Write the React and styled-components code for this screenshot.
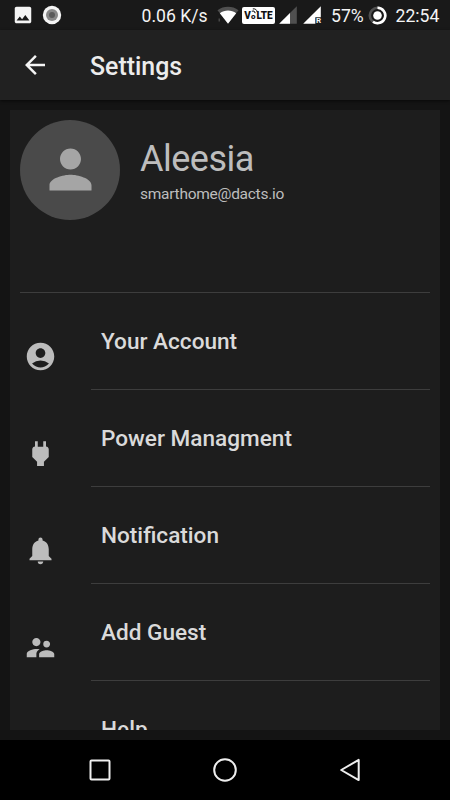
import React from 'react'
import styled, { createGlobalStyle } from 'styled-components'
import {
    MdAccountCircle,
    MdArrowBack,
    MdImage,
    MdNotifications,
    MdPerson,
    MdPower,
    MdSupervisorAccount
} from 'react-icons/md'

const MENU_ITEMS = [
    { label: 'Your Account', icon: MdAccountCircle },
    { label: 'Power Managment', icon: MdPower },
    { label: 'Notification', icon: MdNotifications },
    { label: 'Add Guest', icon: MdSupervisorAccount },
    { label: 'Help', icon: null },
]

const RecordIcon = () => (
    <svg width="20" height="20" viewBox="0 0 20 20">
        <circle cx="10" cy="10" r="9.2" fill="#f4f4f4" />
        <circle cx="10" cy="10" r="6" fill="#888" />
        <circle cx="10" cy="10" r="3" fill="#5a5a5a" />
    </svg>
)

const WifiIcon = () => (
    <svg width="22" height="18" viewBox="0 0 22 18">
        <path d="M0.5 4.200C6.500-.4 15.500-.4 21.500 4.200L11 17.500Z" fill="#505050" />
        <path d="M2.800 7.200C7.500 3.700 14.500 3.700 19.200 7.200L11 17.800Z" fill="#fff" />
        <path d="M1.500 12.500h1.500v3h-1.500z" fill="#484848" />
    </svg>
)

const SignalIcon = ({ roaming }) => (
    <svg width="18" height="18" viewBox="0 0 18 18">
        {roaming
            ? <path d="M17.800.2V11.200H12.300V17.800H.2Z" fill="#fff" />
            : <>
                <path d="M17.800.2V17.800H.2Z" fill="#505050" />
                <path d="M11 7V17.800H.2Z" fill="#fff" />
            </>}
    </svg>
)

const BatteryIcon = () => (
    <svg width="19" height="19" viewBox="0 0 19 19" fill="none">
        <circle cx="9.5" cy="9.5" r="7.700" stroke="#505050" strokeWidth="2.600" />
        <path d="M9.500 1.800a7.700 7.700 0 1 1-4.500 13.900" stroke="#fff" strokeWidth="2.600" />
        <circle cx="9.5" cy="9.5" r="4.300" fill="#fff" />
    </svg>
)

// two small waves rising from the "o" of the VoLTE badge
const VolteWaves = () => (
    <svg width="7" height="6" viewBox="0 0 7 6" fill="none" stroke="#111" strokeWidth="1">
        <path d="M.8 3.200Q3.500 1.800 4.200 5.200" />
        <path d="M1.800.9Q5.500.4 6.200 4" />
    </svg>
)

const StatusBar = () => (
    <Status>
        <StatusItem $left={11.5}><MdImage size={22} /></StatusItem>
        <StatusItem $left={8.5}><RecordIcon /></StatusItem>
        <StatusText $left={79.5} $width={66}>0.06 K/s</StatusText>
        <StatusItem $left={9.5}><WifiIcon /></StatusItem>
        <Volte>
            <span>V</span>
            <VolteO>o<VolteWaves /></VolteO>
            <span>LTE</span>
        </Volte>
        <StatusItem $left={4}><SignalIcon /></StatusItem>
        <StatusItem $left={6}>
            <SignalIcon roaming />
            <Roaming>R</Roaming>
        </StatusItem>
        <StatusText $left={10} $width={32}>57%</StatusText>
        <StatusItem $left={5}><BatteryIcon /></StatusItem>
        <StatusText $left={8.5} $width={44}>22:54</StatusText>
    </Status>
)

const App = () => {
    return (
        <Screen>
            <GlobalStyle />
            <StatusBar />
            <Header>
                <BackButton aria-label="Back"><MdArrowBack size={30} /></BackButton>
                <Title>Settings</Title>
            </Header>
            <Content>
                <Card>
                    <Profile>
                        <Avatar><MdPerson size={63} /></Avatar>
                        <div>
                            <Name>Aleesia</Name>
                            <Email>smarthome@dacts.io</Email>
                        </div>
                    </Profile>
                    <Menu>
                        {MENU_ITEMS.map(({ label, icon: Icon }) => (
                            <MenuItem key={label}>
                                <IconSlot>{Icon && <Icon size={33} />}</IconSlot>
                                <Label>{label}</Label>
                            </MenuItem>
                        ))}
                    </Menu>
                </Card>
            </Content>
            <NavBar>
                <svg width="24" height="24" viewBox="0 0 24 24">
                    <rect x="2.500" y="2.500" width="19" height="19" rx="1" />
                </svg>
                <svg width="24" height="24" viewBox="0 0 24 24">
                    <circle cx="12" cy="12" r="10.800" />
                </svg>
                <svg width="24" height="24" viewBox="0 0 24 24">
                    <path d="M20.700 1.900V22.100L3.200 12Z" />
                </svg>
            </NavBar>
        </Screen>
    )
}

export default App

const GlobalStyle = createGlobalStyle`
    * {
        box-sizing: border-box;
    }
    body {
        margin: 0;
        background: #141414;
        font-family: Roboto, sans-serif;
    }
    svg {
        display: block;
        flex-shrink: 0;
    }
`

const Screen = styled.div`
    display: flex;
    flex-direction: column;
    width: 450px;
    height: 800px;
    overflow: hidden;
    background: #141414;
`

const Status = styled.div`
    display: flex;
    align-items: center;
    height: 30px;
    flex-shrink: 0;
    background: #191919;
    color: #f4f4f4;
`

const StatusItem = styled.div`
    position: relative;
    flex-shrink: 0;
    margin-left: ${({ $left }) => $left}px;
`

const StatusText = styled.span`
    flex-shrink: 0;
    width: ${({ $width }) => $width}px;
    margin-left: ${({ $left }) => $left}px;
    padding-top: 1px;
    font-size: 17.6px;
    line-height: 28px;
    white-space: nowrap;
`

const Volte = styled.div`
    display: flex;
    align-items: center;
    justify-content: center;
    flex-shrink: 0;
    width: 33px;
    height: 17px;
    margin-left: 3px;
    border-radius: 2px;
    background: #fff;
    color: #111;
    font-size: 10px;
    font-weight: 900;
    line-height: 17px;
`

const VolteO = styled.span`
    position: relative;
    padding-top: 2px;
    margin-right: 1px;
    font-size: 8px;
    svg {
        position: absolute;
        left: 0;
        top: 2px;
    }
`

const Roaming = styled.span`
    position: absolute;
    right: 0;
    bottom: -1px;
    font-size: 8px;
    font-weight: 700;
    line-height: 8px;
`

const Header = styled.header`
    display: flex;
    align-items: center;
    height: 70px;
    flex-shrink: 0;
    padding-left: 20px;
    background: #212121;
    box-shadow: 0 1px 3px rgba(0, 0, 0, 0.6);
`

const BackButton = styled.button`
    padding: 0;
    border: 0;
    background: none;
    color: #f4f4f4;
`

const Title = styled.h1`
    margin: 3px 0 0 40px;
    color: #ececec;
    font-size: 24.9px;
    font-weight: 500;
    line-height: 30px;
`

const Content = styled.main`
    height: 640px;
    flex-shrink: 0;
    padding: 10px;
`

const Card = styled.section`
    height: 620px;
    overflow: hidden;
    padding: 10px;
    background: #1d1d1d;
`

const Profile = styled.div`
    display: flex;
    gap: 20px;
    height: 173px;
    border-bottom: 1px solid #3d3d3d;
`

const Avatar = styled.div`
    display: flex;
    align-items: center;
    justify-content: center;
    width: 100px;
    height: 100px;
    padding-bottom: 1px;
    border-radius: 50%;
    background: #4a4a4a;
    color: #a5a5a5;
`

const Name = styled.h2`
    margin: 17px 0 0;
    color: #bdbdbd;
    font-size: 36px;
    font-weight: 400;
    letter-spacing: -0.5px;
    line-height: 44px;
`

const Email = styled.p`
    margin: 3px 0 0;
    color: #bdbdbd;
    font-size: 15.5px;
    letter-spacing: -0.27px;
    line-height: 20px;
`

const Menu = styled.ul`
    margin: 0;
    padding: 0;
    list-style: none;
`

const MenuItem = styled.li`
    display: flex;
    height: 97px;
`

const IconSlot = styled.div`
    width: 71px;
    flex-shrink: 0;
    padding: 47px 0 0 4px;
    color: #bcbcbc;
`

const Label = styled.div`
    display: flex;
    align-items: center;
    flex: 1;
    padding: 1px 0 0 10px;
    border-bottom: 1px solid #3d3d3d;
    color: #dadada;
    font-size: 22.6px;
    font-weight: 500;
`

const NavBar = styled.nav`
    display: flex;
    align-items: center;
    justify-content: space-between;
    height: 60px;
    flex-shrink: 0;
    padding: 0 88px;
    background: #000;
    svg {
        fill: none;
        stroke: #eee;
        stroke-width: 2;
        stroke-linejoin: round;
    }
`
